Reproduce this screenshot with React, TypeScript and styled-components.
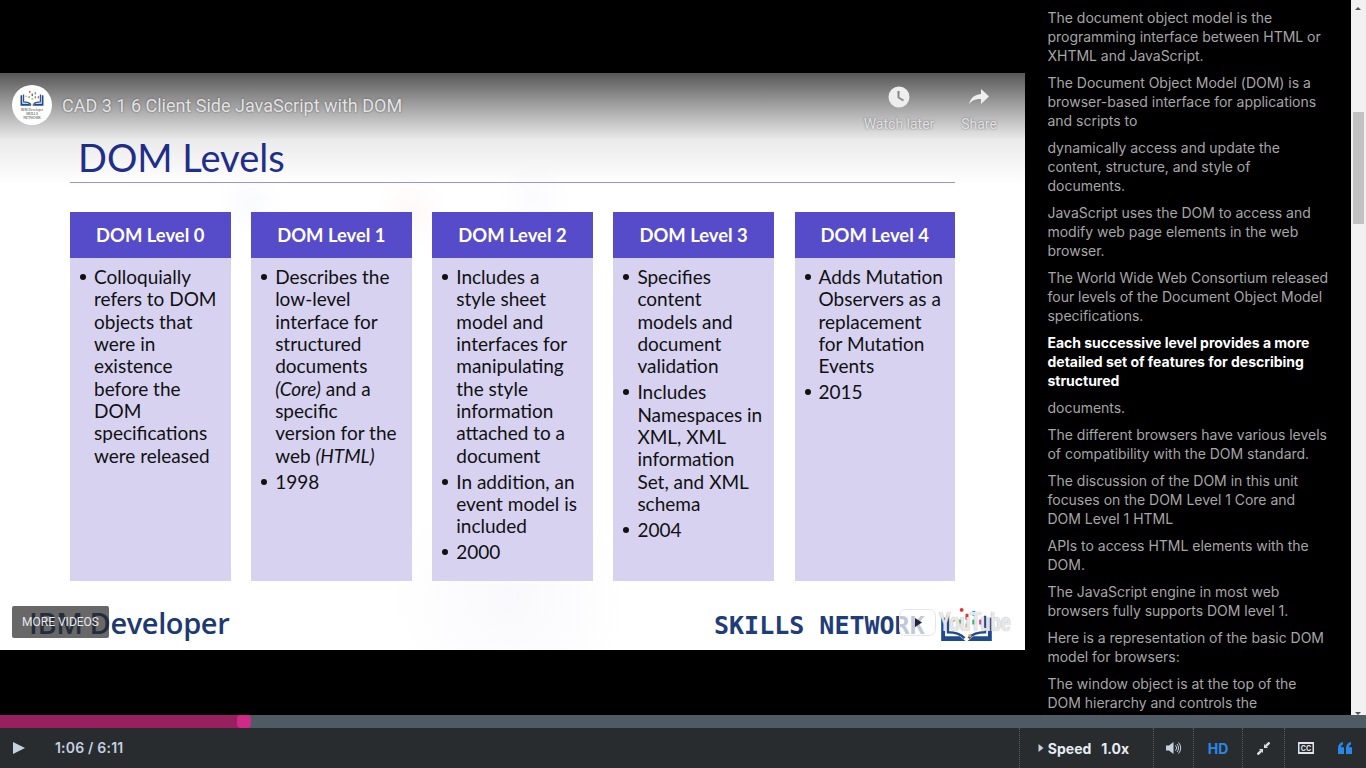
import React from "react";
import styled, { createGlobalStyle } from "styled-components";

const Global = createGlobalStyle`
  html, body {
    margin: 0;
    padding: 0;
    height: 100%;
    overflow: hidden;
    background: #000;
    font-family: Inter, "Liberation Sans", sans-serif;
  }
  * { box-sizing: border-box; }
`;

const Page = styled.div`
  width: 1366px;
  height: 768px;
  display: flex;
  flex-direction: column;
  background: #000;
`;

const Main = styled.div`
  height: 715px;
  display: flex;
`;

const VideoColumn = styled.div`
  width: 1025px;
  padding-top: 73px;
`;

const Player = styled.div`
  position: relative;
  width: 1025px;
  height: 577px;
  background: #fff;
  overflow: hidden;
`;

const Shade = styled.div`
  position: absolute;
  inset: 0 0 auto 0;
  height: 112px;
  background: linear-gradient(to bottom, rgba(0,0,0,.66), rgba(0,0,0,.36) 30%, rgba(0,0,0,.08) 60%, rgba(0,0,0,0));
`;

const TopBar = styled.div`
  position: absolute;
  inset: 0 0 auto 0;
  display: flex;
  align-items: flex-start;
  padding: 12px 6px 0 12px;
  font-family: Roboto, sans-serif;
`;

const Avatar = styled.div`
  width: 40px;
  height: 40px;
  border-radius: 50%;
  background: #fff;
  display: flex;
  flex-direction: column;
  align-items: center;
  justify-content: center;
`;

const AvatarCaption = styled.div`
  width: 26px;
  margin-top: 1px;
  font-family: "Liberation Serif", serif;
  font-size: 3.5px;
  line-height: 4px;
  text-align: center;
  color: #333;
`;

const VideoTitle = styled.div`
  margin-left: 10px;
  flex: 1;
  font-size: 18px;
  line-height: 42px;
  color: #e4e4e4;
  text-shadow: 0 0 2px rgba(0,0,0,.5);
`;

const TopAction = styled.div`
  width: 80px;
  display: flex;
  flex-direction: column;
  align-items: center;
  color: #e2e2e2;
  font-size: 14px;
  line-height: 16px;
  text-shadow: 0 0 2px rgba(0,0,0,.5);
  svg { display: block; margin-bottom: 7px; }
`;

const Slide = styled.div`
  height: 577px;
  padding: 62px 70px 0 70px;
  display: flex;
  flex-direction: column;
  font-family: Lato, "Open Sans", sans-serif;
  background:
    radial-gradient(circle at 410px 140px, rgba(240,120,110,.05), transparent 38px),
    radial-gradient(circle at 535px 125px, rgba(180,150,220,.05), transparent 36px),
    radial-gradient(circle at 250px 130px, rgba(120,140,220,.04), transparent 34px),
    radial-gradient(ellipse at 510px 525px, rgba(120,120,210,.045), transparent 120px);
`;

const SlideTitle = styled.div`
  height: 48px;
  padding-left: 8px;
  font-size: 38px;
  line-height: 45px;
  color: #22308f;
  border-bottom: 1px solid #9a96d8;
`;

const Columns = styled.div`
  margin-top: 29px;
  height: 369px;
  display: grid;
  grid-template-columns: repeat(5, 160.5px);
  justify-content: space-between;
`;

const LevelCard = styled.div`
  display: flex;
  flex-direction: column;
  background: #d6d2f0;
`;

const LevelHead = styled.div`
  height: 46px;
  background: #564bc9;
  color: #fff;
  font-size: 18.4px;
  font-weight: 700;
  display: flex;
  align-items: center;
  justify-content: center;
`;

const LevelList = styled.ul`
  list-style: none;
  margin: 0;
  padding: 8px 0 0 24px;
  color: #111;
  font-size: 19px;
  line-height: 22.35px;
`;

const LevelItem = styled.li`
  position: relative;
  margin-bottom: 3.6px;
  &::before {
    content: "";
    position: absolute;
    left: -14px;
    top: 8px;
    width: 6px;
    height: 6px;
    border-radius: 50%;
    background: #111;
  }
`;

const LevelLine = styled.div`
  white-space: nowrap;
`;

const IbmLogo = styled.div`
  position: absolute;
  left: 29px;
  top: 531px;
  font-family: "Open Sans", sans-serif;
  font-weight: 600;
  font-size: 29px;
  line-height: 38px;
  letter-spacing: -0.4px;
  color: #1d3a70;
`;

const MoreVideos = styled.div`
  position: absolute;
  left: 12px;
  top: 533px;
  width: 97px;
  height: 32px;
  border-radius: 2px;
  background: rgba(40,40,40,.7);
  color: #e8e8e8;
  font-family: Roboto, sans-serif;
  font-size: 12px;
  line-height: 32px;
  text-align: center;
`;

const Skills = styled.div`
  position: absolute;
  left: 714px;
  top: 535px;
  font-family: "DejaVu Sans Mono", "Liberation Mono", monospace;
  font-weight: 700;
  font-size: 25px;
  line-height: 36px;
  color: #1f3d78;
  white-space: nowrap;
`;

const BookLogo = styled.div`
  position: absolute;
  left: 940px;
  top: 533px;
`;

const YoutubeMark = styled.div`
  position: absolute;
  left: 899px;
  top: 534px;
  display: flex;
  align-items: center;
`;

const YoutubeWord = styled.span`
  margin-left: 3px;
  font-family: Roboto, sans-serif;
  font-weight: 700;
  font-size: 26px;
  letter-spacing: -0.6px;
  transform: scaleX(.72);
  transform-origin: left;
  color: rgba(244,244,246,.88);
  text-shadow: 0 0 1px rgba(90,90,90,.65);
`;

const Transcript = styled.div`
  position: relative;
  flex: 1;
  padding: 8px 15px 0 22.5px;
  overflow: hidden;
`;

const Cue = styled.p<{ $active?: boolean }>`
  margin: 0 0 8px 0;
  width: 283px;
  font-size: 14px;
  line-height: 19px;
  color: ${p => (p.$active ? "#fff" : "#a6a6a6")};
  font-weight: ${p => (p.$active ? 700 : 400)};
  letter-spacing: -0.02px;
`;

const ScrollTrack = styled.div`
  position: absolute;
  top: 0;
  right: 0;
  bottom: 0;
  width: 15px;
  background: #f1f1f1;
`;

const ScrollThumb = styled.div`
  position: absolute;
  left: 2px;
  top: 112px;
  width: 11px;
  height: 112px;
  background: #c1c1c1;
`;

const ScrollArrow = styled.div<{ $down?: boolean }>`
  position: absolute;
  left: 4px;
  ${p => (p.$down ? "bottom: 0;" : "top: 7px;")}
  width: 0;
  height: 0;
  border-left: 3.5px solid transparent;
  border-right: 3.5px solid transparent;
  ${p => (p.$down ? "border-top: 3px solid #505050;" : "border-bottom: 3px solid #505050;")}
`;

const Progress = styled.div`
  position: relative;
  height: 13px;
  background: #4f5b62;
`;

const ProgressFill = styled.div`
  height: 13px;
  background: #98205f;
`;

const ProgressThumb = styled.div`
  position: absolute;
  top: 0;
  left: 237px;
  width: 14px;
  height: 13px;
  border-radius: 4px;
  background: #cf2a88;
`;

const Controls = styled.div`
  height: 40px;
  display: flex;
  align-items: stretch;
  background: #282c2f;
`;

const PlayButton = styled.div`
  width: 38px;
  display: flex;
  align-items: center;
  justify-content: center;
`;

const TimeText = styled.div`
  margin-left: 17px;
  flex: 1;
  font-size: 14px;
  font-weight: 600;
  letter-spacing: 0.2px;
  line-height: 40px;
  color: #c5d0e0;
`;

const ControlCell = styled.div<{ $w: number; $plain?: boolean; $shift?: number }>`
  width: ${p => p.$w}px;
  padding-right: ${p => p.$shift ?? 0}px;
  display: flex;
  align-items: center;
  justify-content: center;
  border-left: ${p => (p.$plain ? "none" : "1px dotted #555b60")};
`;

const SpeedLabel = styled.span`
  margin-left: 4px;
  color: #e6ecf4;
  font-size: 14px;
  font-weight: 700;
`;

const SpeedValue = styled(SpeedLabel)`
  margin-left: 10px;
`;

const HdLabel = styled.span`
  color: #2b87e3;
  font-size: 14px;
  font-weight: 700;
`;

const levels: { name: string; items: React.ReactNode[][] }[] = [
  {
    name: "DOM Level 0",
    items: [[
      "Colloquially", "refers to DOM", "objects that", "were in", "existence",
      "before the", "DOM", "specifications", "were released",
    ]],
  },
  {
    name: "DOM Level 1",
    items: [
      [
        "Describes the", "low-level", "interface for", "structured", "documents",
        <><i>(Core)</i> and a</>, "specific", "version for the", <>web <i>(HTML)</i></>,
      ],
      ["1998"],
    ],
  },
  {
    name: "DOM Level 2",
    items: [
      [
        "Includes a", "style sheet", "model and", "interfaces for", "manipulating",
        "the style", "information", "attached to a", "document",
      ],
      ["In addition, an", "event model is", "included"],
      ["2000"],
    ],
  },
  {
    name: "DOM Level 3",
    items: [
      ["Specifies", "content", "models and", "document", "validation"],
      ["Includes", "Namespaces in", "XML, XML", "information", "Set, and XML", "schema"],
      ["2004"],
    ],
  },
  {
    name: "DOM Level 4",
    items: [
      ["Adds Mutation", "Observers as a", "replacement", "for Mutation", "Events"],
      ["2015"],
    ],
  },
];

const cues = [
  "The document object model is the programming interface between HTML or XHTML and JavaScript.",
  "The Document Object Model (DOM) is a browser-based interface for applications and scripts to",
  "dynamically access and update the content, structure, and style of documents.",
  "JavaScript uses the DOM to access and modify web page elements in the web browser.",
  "The World Wide Web Consortium released four levels of the Document Object Model specifications.",
  "Each successive level provides a more detailed set of features for describing structured",
  "documents.",
  "The different browsers have various levels of compatibility with the DOM standard.",
  "The discussion of the DOM in this unit focuses on the DOM Level 1 Core and DOM Level 1 HTML",
  "APIs to access HTML elements with the DOM.",
  "The JavaScript engine in most web browsers fully supports DOM level 1.",
  "Here is a representation of the basic DOM model for browsers:",
  "The window object is at the top of the DOM hierarchy and controls the",
];

// open book with the coloured dots rising out of it
const Book = ({ size }: { size: number }) => (
  <svg width={size} height={size * 0.68} viewBox="0 0 54 37">
    <path d="M1 12h4v19h15l6 5H1zM53 12h-4v19H34l-6 5h25z" fill="#1f4a8c" />
    <path d="M8 10v17c7 0 13 2 17 6M46 10v17c-7 0-13 2-17 6" fill="none" stroke="#1f4a8c" strokeWidth="2.5" />
    <rect x="12" y="13" width="3" height="3" fill="#e8a33a" />
    <rect x="20" y="2" width="4" height="4" rx="2" fill="#e2352d" />
    <rect x="19" y="14" width="3" height="4" fill="#3cb54a" />
    <rect x="26" y="8" width="3" height="6" fill="#e2352d" />
    <rect x="26" y="18" width="3" height="4" fill="#e8a33a" />
    <rect x="33" y="5" width="3" height="5" fill="#2e9fd8" />
    <rect x="33" y="14" width="3" height="5" fill="#3cb54a" />
    <rect x="40" y="14" width="3" height="5" fill="#d83d9a" />
    <rect x="29" y="29" width="3" height="3" fill="#e8a33a" />
  </svg>
);

export default function App() {
  return (
    <Page>
      <Global />
      <Main>
        <VideoColumn>
          <Player>
            <Slide>
              <SlideTitle>DOM Levels</SlideTitle>
              <Columns>
                {levels.map(l => (
                  <LevelCard key={l.name}>
                    <LevelHead>{l.name}</LevelHead>
                    <LevelList>
                      {l.items.map((lines, i) => (
                        <LevelItem key={i}>
                          {lines.map((line, j) => (
                            <LevelLine key={j}>{line}</LevelLine>
                          ))}
                        </LevelItem>
                      ))}
                    </LevelList>
                  </LevelCard>
                ))}
              </Columns>
            </Slide>
            <IbmLogo>IBM Developer</IbmLogo>
            <Skills>SKILLS NETWORK</Skills>
            <BookLogo>
              <Book size={53} />
            </BookLogo>
            <YoutubeMark>
              <svg width="37" height="27" viewBox="0 0 37 27">
                <rect x="0.5" y="0.5" width="36" height="26" rx="6" fill="rgba(255,255,255,.72)" stroke="#e6e6e6" />
                <path d="M16 9l7 4.5-7 4.5z" fill="#223" />
              </svg>
              <YoutubeWord>YouTube</YoutubeWord>
            </YoutubeMark>
            <Shade />
            <TopBar>
              <Avatar>
                <Book size={24} />
                <AvatarCaption>IBM Developer SKILLS NETWORK</AvatarCaption>
              </Avatar>
              <VideoTitle>CAD 3 1 6 Client Side JavaScript with DOM</VideoTitle>
              <TopAction>
                <svg width="24" height="24" viewBox="0 0 24 24">
                  <path d="M12 1.5a10.5 10.5 0 100 21 10.5 10.5 0 000-21zm4 15l-5.5-3.4V6h2v6l4.6 2.8z" fill="#eee" fillRule="evenodd" />
                </svg>
                Watch later
              </TopAction>
              <TopAction>
                <svg width="24" height="24" viewBox="0 0 24 24">
                  <path d="M14 9V4l8 7.5-8 7.5v-5c-6 0-9.5 1.5-12 5.5C3 14 6.5 10 14 9z" fill="#eee" />
                </svg>
                Share
              </TopAction>
            </TopBar>
            <MoreVideos>MORE VIDEOS</MoreVideos>
          </Player>
        </VideoColumn>
        <Transcript>
          {cues.map((c, i) => (
            <Cue key={i} $active={i === 5}>{c}</Cue>
          ))}
          <ScrollTrack>
            <ScrollArrow />
            <ScrollThumb />
            <ScrollArrow $down />
          </ScrollTrack>
        </Transcript>
      </Main>
      <Progress>
        <ProgressFill style={{ width: `${(66 / 371) * 1366}px` }} />
        <ProgressThumb />
      </Progress>
      <Controls>
        <PlayButton>
          <svg width="14" height="14" viewBox="0 0 14 14"><path d="M1 1l12 6-12 6z" fill="#c5d0e0" /></svg>
        </PlayButton>
        <TimeText>1:06 / 6:11</TimeText>
        <ControlCell $w={134} $shift={6}>
          <svg width="6" height="10" viewBox="0 0 6 10"><path d="M0.5 1l5 4-5 4z" fill="#c5d0e0" /></svg>
          <SpeedLabel>Speed</SpeedLabel>
          <SpeedValue>1.0x</SpeedValue>
        </ControlCell>
        <ControlCell $w={40}>
          <svg width="16" height="14" viewBox="0 0 16 14">
            <path d="M0 4.5h3L7.5 1v12L3 9.5H0z" fill="#c5d0e0" />
            <path d="M9.5 4.5a3.5 3.5 0 010 5M11 3a6 6 0 010 8M12.5 1.5a8 8 0 010 11" stroke="#c5d0e0" fill="none" strokeWidth="1" />
          </svg>
        </ControlCell>
        <ControlCell $w={49}>
          <HdLabel>HD</HdLabel>
        </ControlCell>
        <ControlCell $w={42}>
          <svg width="13" height="13" viewBox="0 0 13 13">
            <path d="M12.5 0.5L8.8 4.2M0.5 12.5L4.2 8.8" stroke="#d8dee6" strokeWidth="2.4" fill="none" />
            <path d="M7 2v4h4zM6 11V7H2z" fill="#d8dee6" />
          </svg>
        </ControlCell>
        <ControlCell $w={42}>
          <svg width="16" height="12" viewBox="0 0 16 12">
            <rect x="0" y="0" width="16" height="12" fill="#e0e4ea" />
            <rect x="1.5" y="2" width="13" height="8" fill="#282c2f" />
            <text x="8" y="8.6" fontSize="7" fontWeight="700" textAnchor="middle" fill="#e0e4ea" fontFamily="Inter">CC</text>
          </svg>
        </ControlCell>
        <ControlCell $w={40} $plain $shift={2}>
          <svg width="14" height="12" viewBox="0 0 14 12">
            <path d="M0 12V6c0-3 1.6-5.2 5-6v2.4C3.6 3 3 4 3 5.2h3V12zM8 12V6c0-3 1.6-5.2 5-6v2.4C11.6 3 11 4 11 5.2h3V12z" fill="#2b87e3" />
          </svg>
        </ControlCell>
      </Controls>
    </Page>
  );
}
